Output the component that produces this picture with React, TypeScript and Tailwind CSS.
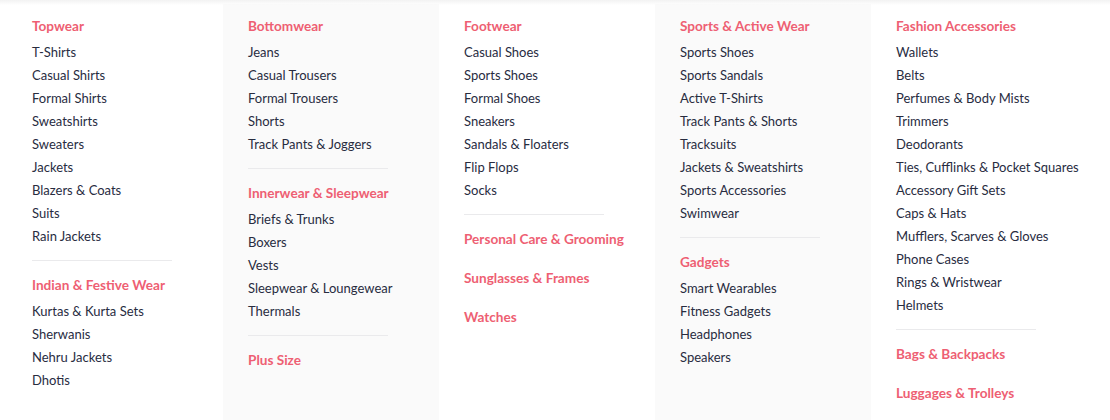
import React from "react";

type Entry =
  | { kind: "group"; title: string; items: string[] }
  | { kind: "title"; title: string }
  | { kind: "sep" };

const columns: { bg: string; entries: Entry[] }[] = [
  {
    bg: "white",
    entries: [
      {
        kind: "group",
        title: "Topwear",
        items: ["T-Shirts", "Casual Shirts", "Formal Shirts", "Sweatshirts", "Sweaters", "Jackets", "Blazers & Coats", "Suits", "Rain Jackets"],
      },
      { kind: "sep" },
      {
        kind: "group",
        title: "Indian & Festive Wear",
        items: ["Kurtas & Kurta Sets", "Sherwanis", "Nehru Jackets", "Dhotis"],
      },
    ],
  },
  {
    bg: "gray",
    entries: [
      {
        kind: "group",
        title: "Bottomwear",
        items: ["Jeans", "Casual Trousers", "Formal Trousers", "Shorts", "Track Pants & Joggers"],
      },
      { kind: "sep" },
      {
        kind: "group",
        title: "Innerwear & Sleepwear",
        items: ["Briefs & Trunks", "Boxers", "Vests", "Sleepwear & Loungewear", "Thermals"],
      },
      { kind: "sep" },
      { kind: "title", title: "Plus Size" },
    ],
  },
  {
    bg: "white",
    entries: [
      {
        kind: "group",
        title: "Footwear",
        items: ["Casual Shoes", "Sports Shoes", "Formal Shoes", "Sneakers", "Sandals & Floaters", "Flip Flops", "Socks"],
      },
      { kind: "sep" },
      { kind: "title", title: "Personal Care & Grooming" },
      { kind: "title", title: "Sunglasses & Frames" },
      { kind: "title", title: "Watches" },
    ],
  },
  {
    bg: "gray",
    entries: [
      {
        kind: "group",
        title: "Sports & Active Wear",
        items: ["Sports Shoes", "Sports Sandals", "Active T-Shirts", "Track Pants & Shorts", "Tracksuits", "Jackets & Sweatshirts", "Sports Accessories", "Swimwear"],
      },
      { kind: "sep" },
      {
        kind: "group",
        title: "Gadgets",
        items: ["Smart Wearables", "Fitness Gadgets", "Headphones", "Speakers"],
      },
    ],
  },
  {
    bg: "white",
    entries: [
      {
        kind: "group",
        title: "Fashion Accessories",
        items: [
          "Wallets",
          "Belts",
          "Perfumes & Body Mists",
          "Trimmers",
          "Deodorants",
          "Ties, Cufflinks & Pocket Squares",
          "Accessory Gift Sets",
          "Caps & Hats",
          "Mufflers, Scarves & Gloves",
          "Phone Cases",
          "Rings & Wristwear",
          "Helmets",
        ],
      },
      { kind: "sep" },
      { kind: "title", title: "Bags & Backpacks" },
      { kind: "title", title: "Luggages & Trolleys" },
    ],
  },
];

function Column({ entries }: { entries: Entry[] }) {
  return (
    <div className="flex flex-col">
      {entries.map((e, i) => {
        if (e.kind === "sep") {
          return <div key={i} className="w-[140px] h-[1px] bg-[#eaeaec] mt-[12px] mb-[13px]" />;
        }
        if (e.kind === "title") {
          const next = entries[i + 1];
          return (
            <div
              key={i}
              className={
                "text-[13.6px] leading-[23px] font-bold text-[#ee5f73] whitespace-nowrap " +
                (next && next.kind === "title" ? "mb-[16px]" : "")
              }
            >
              {e.title}
            </div>
          );
        }
        return (
          <div key={i} className="flex flex-col">
            <div className="text-[13.6px] leading-[23px] font-bold text-[#ee5f73] mb-[3px] whitespace-nowrap">{e.title}</div>
            {e.items.map((it) => (
              <div key={it} className="text-[13px] leading-[23px] text-[#282c3f] whitespace-nowrap">
                {it}
              </div>
            ))}
          </div>
        );
      })}
    </div>
  );
}

export default function App() {
  return (
    <div
      className="relative w-[1110px] h-[420px] bg-white flex overflow-hidden"
      style={{ fontFamily: "Lato, 'Noto Sans', sans-serif" }}
    >
      <div className="pointer-events-none absolute left-0 right-0 top-0 h-[5px] bg-gradient-to-b from-[#f2f2f2] to-transparent" />
      {columns.map((c, idx) => (
        <div
          key={idx}
          className={
            (idx === 0 ? "w-[223px] pl-[32px] " : idx === 4 ? "flex-1 pl-[25px] " : "w-[216px] pl-[25px] ") +
            (c.bg === "gray" ? "bg-[#fafafa] mt-[4px] pt-[11px]" : "bg-white pt-[15px]")
          }
        >
          <Column entries={c.entries} />
        </div>
      ))}
    </div>
  );
}
